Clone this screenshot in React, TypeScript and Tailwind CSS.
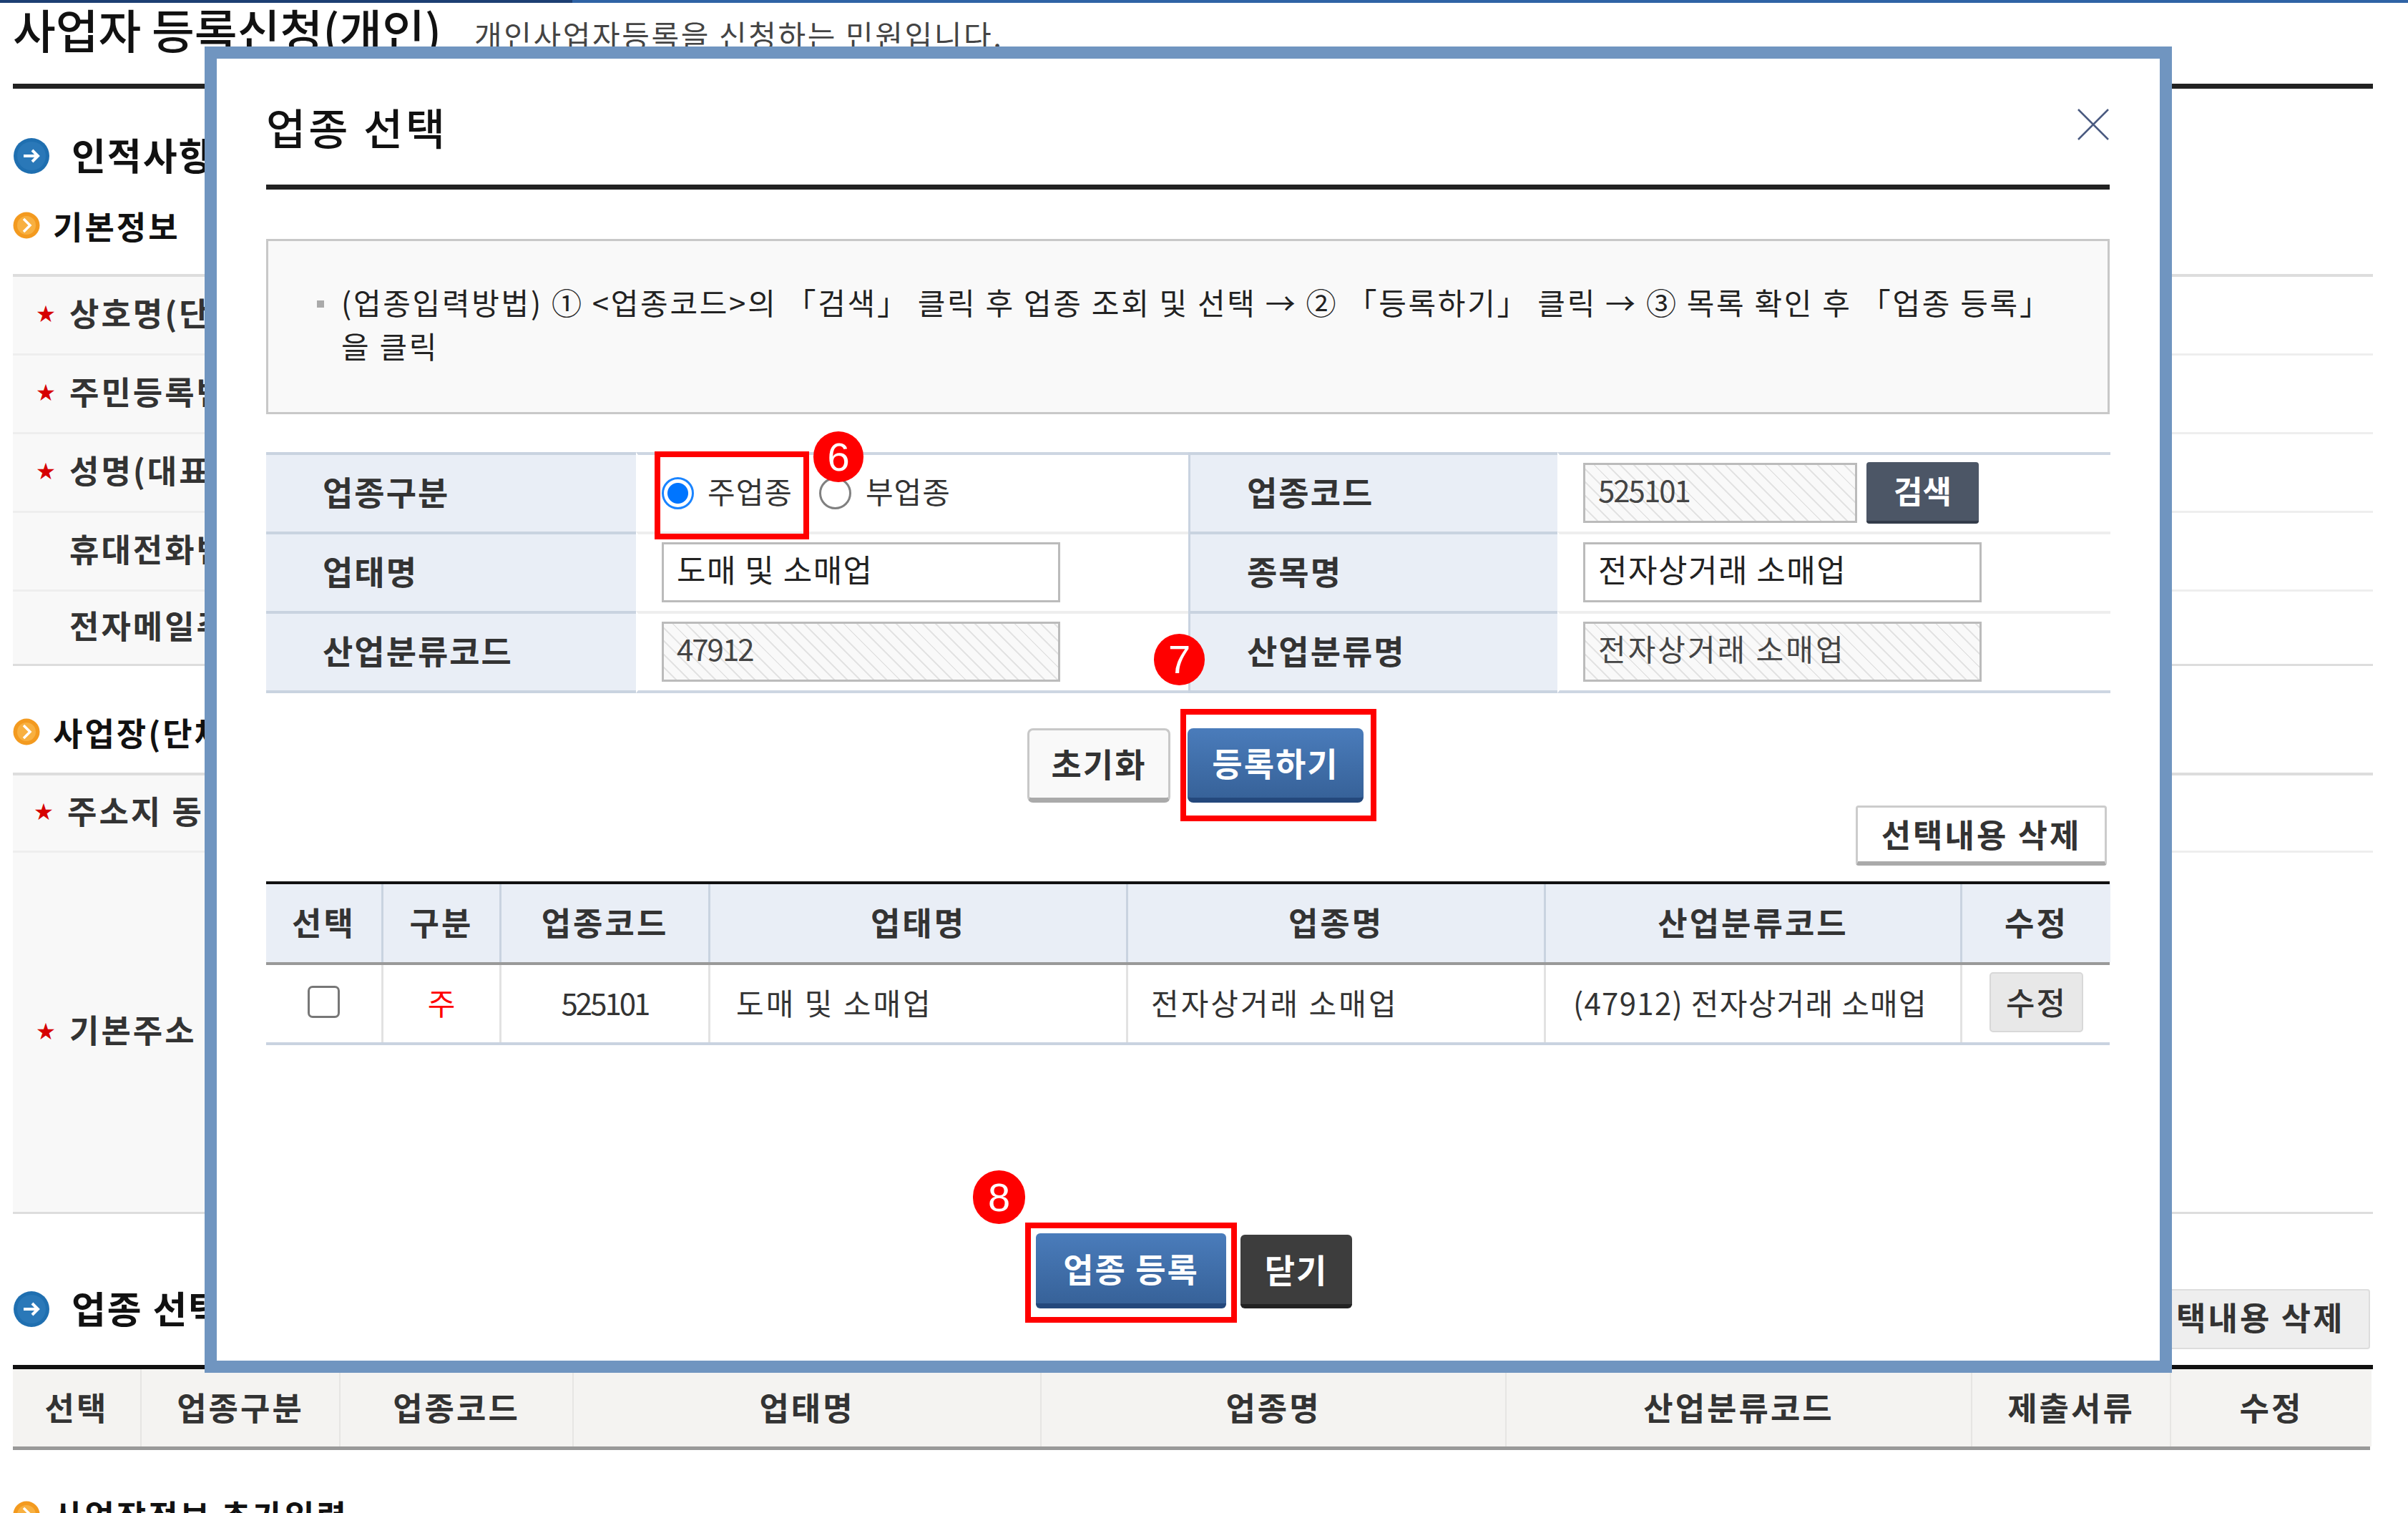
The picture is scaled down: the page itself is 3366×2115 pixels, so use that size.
import React from "react";

const Arrow = ({ size }: { size: number }) => (
  <svg width={size} height={size} viewBox="0 0 52 52" className="shrink-0">
    <circle cx="26" cy="26" r="25" fill="#1f6fb0" />
    <circle cx="26" cy="26" r="20" fill="#2a78b8" />
    <path d="M15 26h20M27 18l8 8-8 8" stroke="#fff" strokeWidth="4" fill="none" />
  </svg>
);
const Chevron = () => (
  <svg width="38" height="38" viewBox="0 0 38 38" className="shrink-0">
    <circle cx="19" cy="19" r="18.5" fill="#f39a1f" />
    <circle cx="19" cy="19" r="13" fill="#f8b040" />
    <path d="M15 10l9 9-9 9" stroke="#fff" strokeWidth="3.5" fill="none" />
  </svg>
);
const Big = ({ children }: { children: React.ReactNode }) => (
  <div className="flex items-center gap-[30px] text-[52px] leading-none font-bold text-[#111] tracking-[2px]">
    <Arrow size={52} />
    <span className="pb-[3px]">{children}</span>
  </div>
);
const Sub = ({ children }: { children: React.ReactNode }) => (
  <div className="flex items-center gap-[18px] text-[45px] leading-none font-bold text-[#111] h-[38px] tracking-[3px]">
    <Chevron />
    <span>{children}</span>
  </div>
);
const BgRow = ({ label, star, h, line }: { label: string; star?: boolean; h: string; line: string }) => (
  <div className={`${h} ${line} border-b-[3px] flex`}>
    <div className="w-[400px] bg-[#f8f8f8] flex items-center pb-[8px] text-[45px] font-bold text-[#333] whitespace-nowrap tracking-[3px]">
      <span className="w-[62px] text-right text-[26px] text-[#d60000] mr-[17px]">{star ? "★" : ""}</span>
      {label}
    </div>
  </div>
);
const Badge = ({ n, cls }: { n: string; cls: string }) => (
  <div className={`absolute ${cls} rounded-full bg-[#ff0000] text-white text-[56px] leading-none flex items-center justify-center font-['Liberation_Sans',sans-serif]`}>
    {n}
  </div>
);
const Lbl = ({ children, last, left }: { children: React.ReactNode; last?: boolean; left?: boolean }) => (
  <div className={`bg-[#e9eef6] border-t-[4px] border-[#c9d3e0] flex items-center pb-[7px] text-[46px] font-bold text-[#333] tracking-[2px] ${last ? "border-b-[4px]" : ""} ${left ? "border-l-[3px] pl-[79px]" : "pl-[79px]"}`}>
    {children}
  </div>
);
const Val = ({ children, first, last }: { children: React.ReactNode; first?: boolean; last?: boolean }) => (
  <div className={`border-t-[4px] border-l-[3px] border-l-white flex items-center pl-[33px] pb-[2px] text-[42px] text-[#333] ${first ? "border-t-[#cdd6e2]" : "border-t-[#eeeeee]"} ${last ? "border-b-[4px] border-b-[#cdd6e2]" : ""}`}>
    {children}
  </div>
);
const inputPlain = "h-[84px] border-[3px] border-[#bbbbbb] bg-white pl-[18px] pb-[10px] text-[44px] text-[#222] outline-none tracking-[1.5px]";
const inputHatch = "h-[84px] border-[3px] border-[#bbbbbb] pl-[18px] pb-[10px] text-[42px] text-[#444] outline-none bg-[repeating-linear-gradient(45deg,#f9f9f9_0,#f9f9f9_11px,#e3e3e3_11px,#e3e3e3_13px)]";
const Th = ({ children, end }: { children: React.ReactNode; end?: boolean }) => (
  <div className={`flex items-center justify-center pb-[3px] bg-[#e9eef6] text-[45px] font-bold text-[#333] tracking-[3px] ${end ? "" : "border-r-[3px] border-[#c9d3e0]"}`}>{children}</div>
);
const Td = ({ children, end, cls }: { children: React.ReactNode; end?: boolean; cls?: string }) => (
  <div className={`flex items-center pb-[5px] text-[42px] text-[#333] ${end ? "" : "border-r-[3px] border-[#e2e2e2]"} ${cls ?? "justify-center"}`}>{children}</div>
);
const BgTh = ({ children, end }: { children: React.ReactNode; end?: boolean }) => (
  <div className={`flex items-center justify-center pb-[2px] bg-[#f4f3f1] text-[45px] font-bold text-[#333] tracking-[3px] ${end ? "" : "border-r-[2px] border-[#e6e5e3]"}`}>{children}</div>
);

export default function App() {
  return (
    <div className="relative w-[3366px] h-[2115px] overflow-hidden bg-white font-['Noto_Sans_CJK_KR','Liberation_Sans',sans-serif] text-[#222]">
      <div className="flex h-[4px]">
        <div className="w-[800px] bg-[#1d3f73]" />
        <div className="flex-1 bg-[#2f63a5]" />
      </div>
      <div className="pl-[18px] w-[3317px]">
        <div className="h-[120px] border-b-[7px] border-[#222] flex items-start gap-[46px] whitespace-nowrap">
          <span className="text-[65px] leading-[72px] text-[#111] font-medium">사업자 등록신청(개인)</span>
          <span className="text-[42px] leading-[72px] pt-[8px] text-[#444] tracking-[2.6px]">개인사업자등록을 신청하는 민원입니다.</span>
        </div>
        <div className="mt-[66px]"><Big>인적사항</Big></div>
        <div className="mt-[51px]"><Sub>기본정보</Sub></div>
        <div className="mt-[49px] border-t-[4px] border-[#dddddd]">
          <BgRow h="h-[110px]" line="border-[#eeeeee]" star label="상호명(단체명)" />
          <BgRow h="h-[110px]" line="border-[#eeeeee]" star label="주민등록번호" />
          <BgRow h="h-[110px]" line="border-[#eeeeee]" star label="성명(대표자)" />
          <BgRow h="h-[110px]" line="border-[#eeeeee]" label="휴대전화번호" />
          <BgRow h="h-[104px]" line="border-[#dddddd]" label="전자메일주소" />
        </div>
        <div className="mt-[73px]"><Sub>사업장(단체)정보</Sub></div>
        <div className="mt-[38px] border-t-[4px] border-[#dddddd]">
          <BgRow h="h-[108px]" line="border-[#eeeeee]" star label="주소지 동일여부" />
          <BgRow h="h-[505px]" line="border-[#dddddd]" star label="기본주소" />
        </div>
        <div className="mt-[105px] h-[112px] border-b-[6px] border-[#111] flex items-start justify-between pr-[4px]">
          <Big>업종 선택</Big>
          <div className="w-[351px] h-[84px] pb-[6px] bg-[#eeeeee] border-[2px] border-[#dddddd] rounded-[4px] flex items-center justify-center text-[45px] font-bold text-[#333] tracking-[3px]">선택내용 삭제</div>
        </div>
        <div className="mr-[4px] h-[113px] border-b-[5px] border-[#999999] grid grid-cols-[180px_278px_326px_654px_650px_651px_278px_280px]">
          <BgTh>선택</BgTh>
          <BgTh>업종구분</BgTh>
          <BgTh>업종코드</BgTh>
          <BgTh>업태명</BgTh>
          <BgTh>업종명</BgTh>
          <BgTh>산업분류코드</BgTh>
          <BgTh>제출서류</BgTh>
          <BgTh end>수정</BgTh>
        </div>
        <div className="mt-[71px]"><Sub>사업장정보 추가입력</Sub></div>
      </div>

      {/* modal dialog */}
      <div className="absolute left-[286px] top-[65px] w-[2750px] h-[1854px] border-[17px] border-[#7095c0] bg-white pl-[69px] pr-[70px]">
        <div className="h-[183px] border-b-[7px] border-[#222] flex items-center justify-between pt-[14px]">
          <span className="text-[60px] leading-none font-medium text-[#111] tracking-[4px]">업종 선택</span>
          <svg width="44" height="44" viewBox="0 0 44 44" className="mr-[1px] mt-[-7px]">
            <path d="M1 1l42 42M43 1L1 43" stroke="#4a5a80" strokeWidth="2.5" />
          </svg>
        </div>
        <div className="mt-[69px] h-[245px] border-[3px] border-[#c8c8c8] bg-[#f9f9f9] pl-[102px] pt-[54px] relative text-[42px] leading-[61px] text-[#222] whitespace-nowrap tracking-[2.7px]">
          <span className="absolute left-[68px] top-[83px] w-[10px] h-[10px] bg-[#aaaaaa]" />
          (업종입력방법) ① &lt;업종코드&gt;의 「검색」 클릭 후 업종 조회 및 선택 → ② 「등록하기」 클릭 → ③ 목록 확인 후 「업종 등록」
          <br />
          을 클릭
        </div>

        <div className="mt-[53px] grid grid-cols-[517px_772px_516px_773px] grid-rows-[111px_111px_115px]">
          <Lbl>업종구분</Lbl>
          <Val first>
            <input type="radio" name="kind" defaultChecked className="appearance-none w-[45px] h-[45px] m-0 mt-[2px] rounded-full border-[3px] border-[#1a84ff] bg-[radial-gradient(circle,#0075ff_0,#0075ff_14px,#ffffff_15px)]" />
            <span className="ml-[19px] mr-[37px] text-[42px] tracking-[1px] pb-[6px]">주업종</span>
            <input type="radio" name="kind" className="appearance-none w-[45px] h-[45px] m-0 mt-[2px] rounded-full border-[3px] border-[#808080] bg-white" />
            <span className="ml-[20px] text-[42px] tracking-[1px] pb-[6px]">부업종</span>
          </Val>
          <Lbl left>업종코드</Lbl>
          <Val first>
            <input readOnly value="525101" className={`${inputHatch} w-[383px] tracking-[-2px]`} />
            <button className="ml-[13px] w-[157px] h-[86px] pb-[4px] bg-[#4c5666] rounded-[4px] border-b-[4px] border-[#333c4a] text-white text-[44px] font-bold">검색</button>
          </Val>
          <Lbl>업태명</Lbl>
          <Val>
            <input readOnly value="도매 및 소매업" className={`${inputPlain} w-[557px]`} />
          </Val>
          <Lbl left>종목명</Lbl>
          <Val>
            <input readOnly value="전자상거래 소매업" className={`${inputPlain} w-[557px]`} />
          </Val>
          <Lbl last>산업분류코드</Lbl>
          <Val last>
            <input readOnly value="47912" className={`${inputHatch} w-[557px] tracking-[-2px]`} />
          </Val>
          <Lbl last left>산업분류명</Lbl>
          <Val last>
            <input readOnly value="전자상거래 소매업" className={`${inputHatch} w-[557px] tracking-[3px]`} />
          </Val>
        </div>

        <div className="mt-[49px] pl-[1064px] flex gap-[24px]">
          <button className="w-[200px] h-[104px] pb-[3px] rounded-[8px] border-[3px] border-b-[7px] border-[#c8c8c8] border-b-[#aaaaaa] bg-[#f9f9f9] text-[46px] font-bold text-[#333] tracking-[2px]">초기화</button>
          <button className="w-[246px] h-[104px] pb-[3px] rounded-[8px] border-b-[7px] border-[#24487c] bg-gradient-to-b from-[#4a7cbb] to-[#376299] text-[46px] font-bold text-white tracking-[2px]">등록하기</button>
        </div>

        <div className="mt-[4px] flex justify-end pr-[4px]">
          <button className="w-[351px] h-[84px] pb-[2px] rounded-[4px] border-[3px] border-b-[6px] border-[#cccccc] border-b-[#aaaaaa] bg-white text-[45px] font-bold text-[#333] tracking-[3px]">선택내용 삭제</button>
        </div>

        <div className="mt-[22px] border-t-[4px] border-[#111]">
          <div className="h-[113px] border-b-[4px] border-[#999999] grid grid-cols-[164px_165px_292px_584px_584px_582px_207px]">
            <Th>선택</Th>
            <Th>구분</Th>
            <Th>업종코드</Th>
            <Th>업태명</Th>
            <Th>업종명</Th>
            <Th>산업분류코드</Th>
            <Th end>수정</Th>
          </div>
          <div className="h-[112px] border-b-[4px] border-[#c9d3e0] grid grid-cols-[164px_165px_292px_584px_584px_582px_207px]">
            <Td>
              <input type="checkbox" className="appearance-none w-[45px] h-[45px] m-0 rounded-[7px] border-[3px] border-[#777777] bg-white" />
            </Td>
            <Td><span className="text-[#ff0000]">주</span></Td>
            <Td><span className="tracking-[-3px]">525101</span></Td>
            <Td cls="justify-start pl-[36px] tracking-[3px]">도매 및 소매업</Td>
            <Td cls="justify-start pl-[32px] tracking-[3px]">전자상거래 소매업</Td>
            <Td cls="justify-start pl-[38px]"><span className="whitespace-nowrap tracking-[1.3px]">(47912) 전자상거래 소매업</span></Td>
            <Td end>
              <button className="w-[131px] h-[84px] pb-[2px] rounded-[5px] border-[2px] border-[#d8d8d8] bg-[#e8e8e8] text-[44px] font-medium text-[#333] tracking-[2px]">수정</button>
            </Td>
          </div>
        </div>

        <div className="mt-[263px] pl-[1076px] flex gap-[20px]">
          <button className="w-[266px] h-[105px] pb-[2px] rounded-[6px] border-b-[7px] border-[#24487c] bg-gradient-to-b from-[#4a7cbb] to-[#376299] text-[46px] font-bold text-white tracking-[2px]">업종 등록</button>
          <button className="w-[156px] h-[103px] mt-[2px] pb-[2px] rounded-[6px] border-b-[6px] border-[#222222] bg-[#3d3d3d] text-[46px] font-bold text-white tracking-[2px]">닫기</button>
        </div>

        {/* numbered annotations drawn over the dialog */}
        <div className="absolute left-[612px] top-[549px] w-[216px] h-[123px] border-[8px] border-[#ff0000]" />
        <Badge n="6" cls="left-[834px] top-[521px] w-[70px] h-[71px]" />
        <Badge n="7" cls="left-[1310px] top-[804px] w-[71px] h-[72px]" />
        <div className="absolute left-[1347px] top-[909px] w-[274px] h-[157px] border-[8px] border-[#ff0000]" />
        <Badge n="8" cls="left-[1057px] top-[1554px] w-[73px] h-[75px]" />
        <div className="absolute left-[1130px] top-[1627px] w-[296px] h-[140px] border-[8px] border-[#ff0000]" />
      </div>
    </div>
  );
}
